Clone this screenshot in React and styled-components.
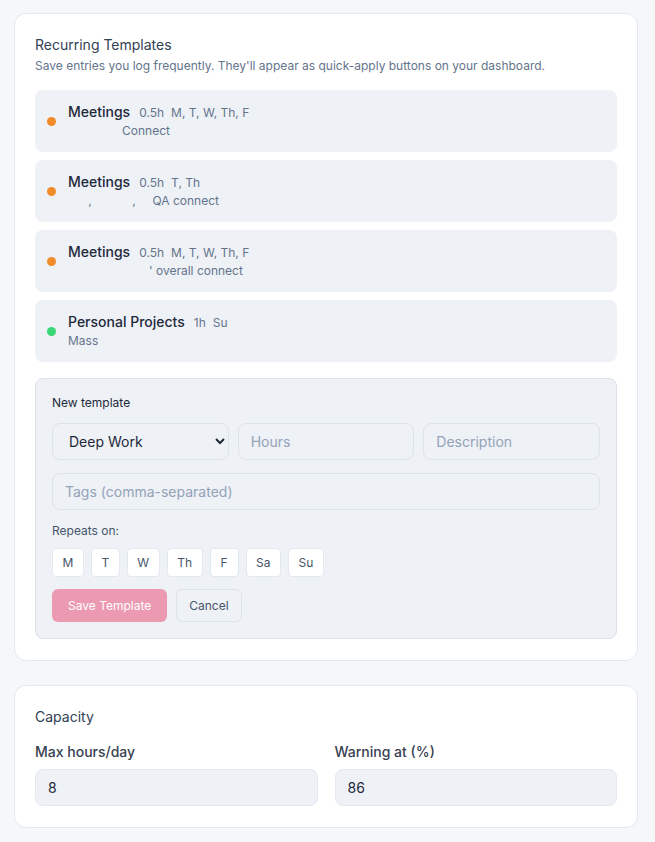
import React, { useState } from "react";
import styled, { createGlobalStyle } from "styled-components";

const GlobalStyle = createGlobalStyle`
  body {
    margin: 0;
    background: #f6f7f9;
    font-family: "Inter", "Liberation Sans", sans-serif;
    color: #1f2937;
  }
`;

const templates = [
  { name: "Meetings", hours: "0.5h", days: "M, T, W, Th, F", desc: "                Connect", color: "#f28c2b" },
  { name: "Meetings", hours: "0.5h", days: "T, Th", desc: "      ,            ,     QA connect", color: "#f28c2b" },
  { name: "Meetings", hours: "0.5h", days: "M, T, W, Th, F", desc: "                        ' overall connect", color: "#f28c2b" },
  { name: "Personal Projects", hours: "1h", days: "Su", desc: "Mass", color: "#3bd774" },
];

const days = ["M", "T", "W", "Th", "F", "Sa", "Su"];

const App = () => {
  const [picked, setPicked] = useState([]);
  const toggle = (d) =>
    setPicked((p) => (p.includes(d) ? p.filter((x) => x !== d) : [...p, d]));

  return (
    <Page>
      <GlobalStyle />
      <Card>
        <Title>Recurring Templates</Title>
        <Subtitle>
          Save entries you log frequently. They'll appear as quick-apply buttons on your dashboard.
        </Subtitle>
        <List>
          {templates.map((t, i) => (
            <Item key={i}>
              <Dot $color={t.color} />
              <div>
                <NameRow>
                  <Name>{t.name}</Name>
                  <Meta>{t.hours}</Meta>
                  <Meta>{t.days}</Meta>
                </NameRow>
                <Desc>{t.desc}</Desc>
              </div>
            </Item>
          ))}
        </List>

        <Panel>
          <PanelLabel>New template</PanelLabel>
          <FieldRow>
            <Select defaultValue="Deep Work">
              <option>Deep Work</option>
              <option>Meetings</option>
              <option>Personal Projects</option>
            </Select>
            <Input placeholder="Hours" />
            <Input placeholder="Description" />
          </FieldRow>
          <Input placeholder="Tags (comma-separated)" />
          <SmallLabel>Repeats on:</SmallLabel>
          <DayRow>
            {days.map((d) => (
              <DayButton key={d} $on={picked.includes(d)} onClick={() => toggle(d)}>
                {d}
              </DayButton>
            ))}
          </DayRow>
          <Actions>
            <SaveButton disabled>Save Template</SaveButton>
            <CancelButton>Cancel</CancelButton>
          </Actions>
        </Panel>
      </Card>

      <Card>
        <Title>Capacity</Title>
        <CapacityGrid>
          <Field>
            <FieldLabel>Max hours/day</FieldLabel>
            <CapInput defaultValue="8" />
          </Field>
          <Field>
            <FieldLabel>Warning at (%)</FieldLabel>
            <CapInput defaultValue="86" />
          </Field>
        </CapacityGrid>
      </Card>
    </Page>
  );
};

const Page = styled.div`
  padding: 13px 17px 16px 14px;
  display: flex;
  flex-direction: column;
  gap: 24px;
`;

const Card = styled.section`
  background: #fff;
  border: 1px solid #e2e8f0;
  border-radius: 12px;
  padding: 21px 20px 21px 20px;
`;

const Title = styled.h3`
  margin: 0;
  font-size: 14px;
  font-weight: 400;
  color: #334155;
  line-height: 20px;
`;

const Subtitle = styled.p`
  margin: 2px 0 0;
  font-size: 12px;
  line-height: 18px;
  color: #64748b;
`;

const List = styled.div`
  display: flex;
  flex-direction: column;
  gap: 8px;
  margin-top: 15px;
`;

const Item = styled.div`
  display: flex;
  align-items: center;
  gap: 12px;
  background: #eef1f6;
  border-radius: 8px;
  padding: 12px;
  min-height: 38px;
`;

const Dot = styled.span`
  width: 9px;
  height: 9px;
  border-radius: 50%;
  background: ${(p) => p.$color};
  flex-shrink: 0;
`;

const NameRow = styled.div`
  display: flex;
  align-items: baseline;
  gap: 7px;
`;

const Name = styled.span`
  font-size: 14px;
  font-weight: 450;
  color: #1e293b;
  line-height: 20px;
  margin-right: 2px;
`;

const Meta = styled.span`
  font-size: 12px;
  color: #64748b;
`;

const Desc = styled.div`
  font-size: 12px;
  line-height: 18px;
  color: #64748b;
  white-space: pre;
`;

const Panel = styled.div`
  margin-top: 16px;
  background: #eef1f6;
  border: 1px solid #dbe2ea;
  border-radius: 8px;
  padding: 16px;
  display: flex;
  flex-direction: column;
  gap: 13px;
`;

const PanelLabel = styled.div`
  font-size: 12px;
  font-weight: 400;
  color: #1e293b;
  line-height: 16px;
  margin-bottom: -1px;
`;

const FieldRow = styled.div`
  display: grid;
  grid-template-columns: repeat(3, 1fr);
  gap: 9px;
`;

const Input = styled.input`
  box-sizing: border-box;
  height: 37px;
  width: 100%;
  padding: 0 12px;
  font-family: inherit;
  font-size: 14px;
  color: #1e293b;
  background: #eef1f6;
  border: 1px solid #dde3eb;
  border-radius: 8px;
  outline: none;
  &::placeholder {
    color: #94a3b8;
  }
`;

const Select = styled.select`
  box-sizing: border-box;
  height: 37px;
  width: 100%;
  padding: 0 8px 0 12px;
  font-family: inherit;
  font-size: 14px;
  color: #1e293b;
  background: #eef1f6;
  border: 1px solid #dde3eb;
  border-radius: 8px;
  outline: none;
`;

const SmallLabel = styled.div`
  font-size: 12px;
  color: #475569;
  line-height: 16px;
  margin-top: 0;
  margin-bottom: -4px;
`;

const DayRow = styled.div`
  display: flex;
  gap: 7px;
`;

const DayButton = styled.button`
  height: 29px;
  padding: 0 9.5px;
  min-width: 29px;
  font-family: inherit;
  font-size: 12px;
  color: ${(p) => (p.$on ? "#fff" : "#475569")};
  background: ${(p) => (p.$on ? "#e11d48" : "#fff")};
  border: 1px solid #e2e8f0;
  border-radius: 4px;
  cursor: pointer;
`;

const Actions = styled.div`
  display: flex;
  gap: 9px;
  margin-top: -1px;
`;

const SaveButton = styled.button`
  height: 33px;
  padding: 0 16px;
  font-family: inherit;
  font-size: 12px;
  color: #fff;
  background: #ec9ab2;
  border: none;
  border-radius: 6px;
`;

const CancelButton = styled.button`
  height: 33px;
  padding: 0 12px;
  font-family: inherit;
  font-size: 12px;
  color: #475569;
  background: transparent;
  border: 1px solid #dde3eb;
  border-radius: 6px;
`;

const CapacityGrid = styled.div`
  display: grid;
  grid-template-columns: 1fr 1fr;
  gap: 17px;
  margin-top: 15px;
`;

const Field = styled.label`
  display: flex;
  flex-direction: column;
  gap: 7px;
`;

const FieldLabel = styled.span`
  font-size: 14px;
  font-weight: 450;
  color: #374151;
  line-height: 20px;
`;

const CapInput = styled(Input)`
  border-color: #e2e8f0;
`;

export default App;
